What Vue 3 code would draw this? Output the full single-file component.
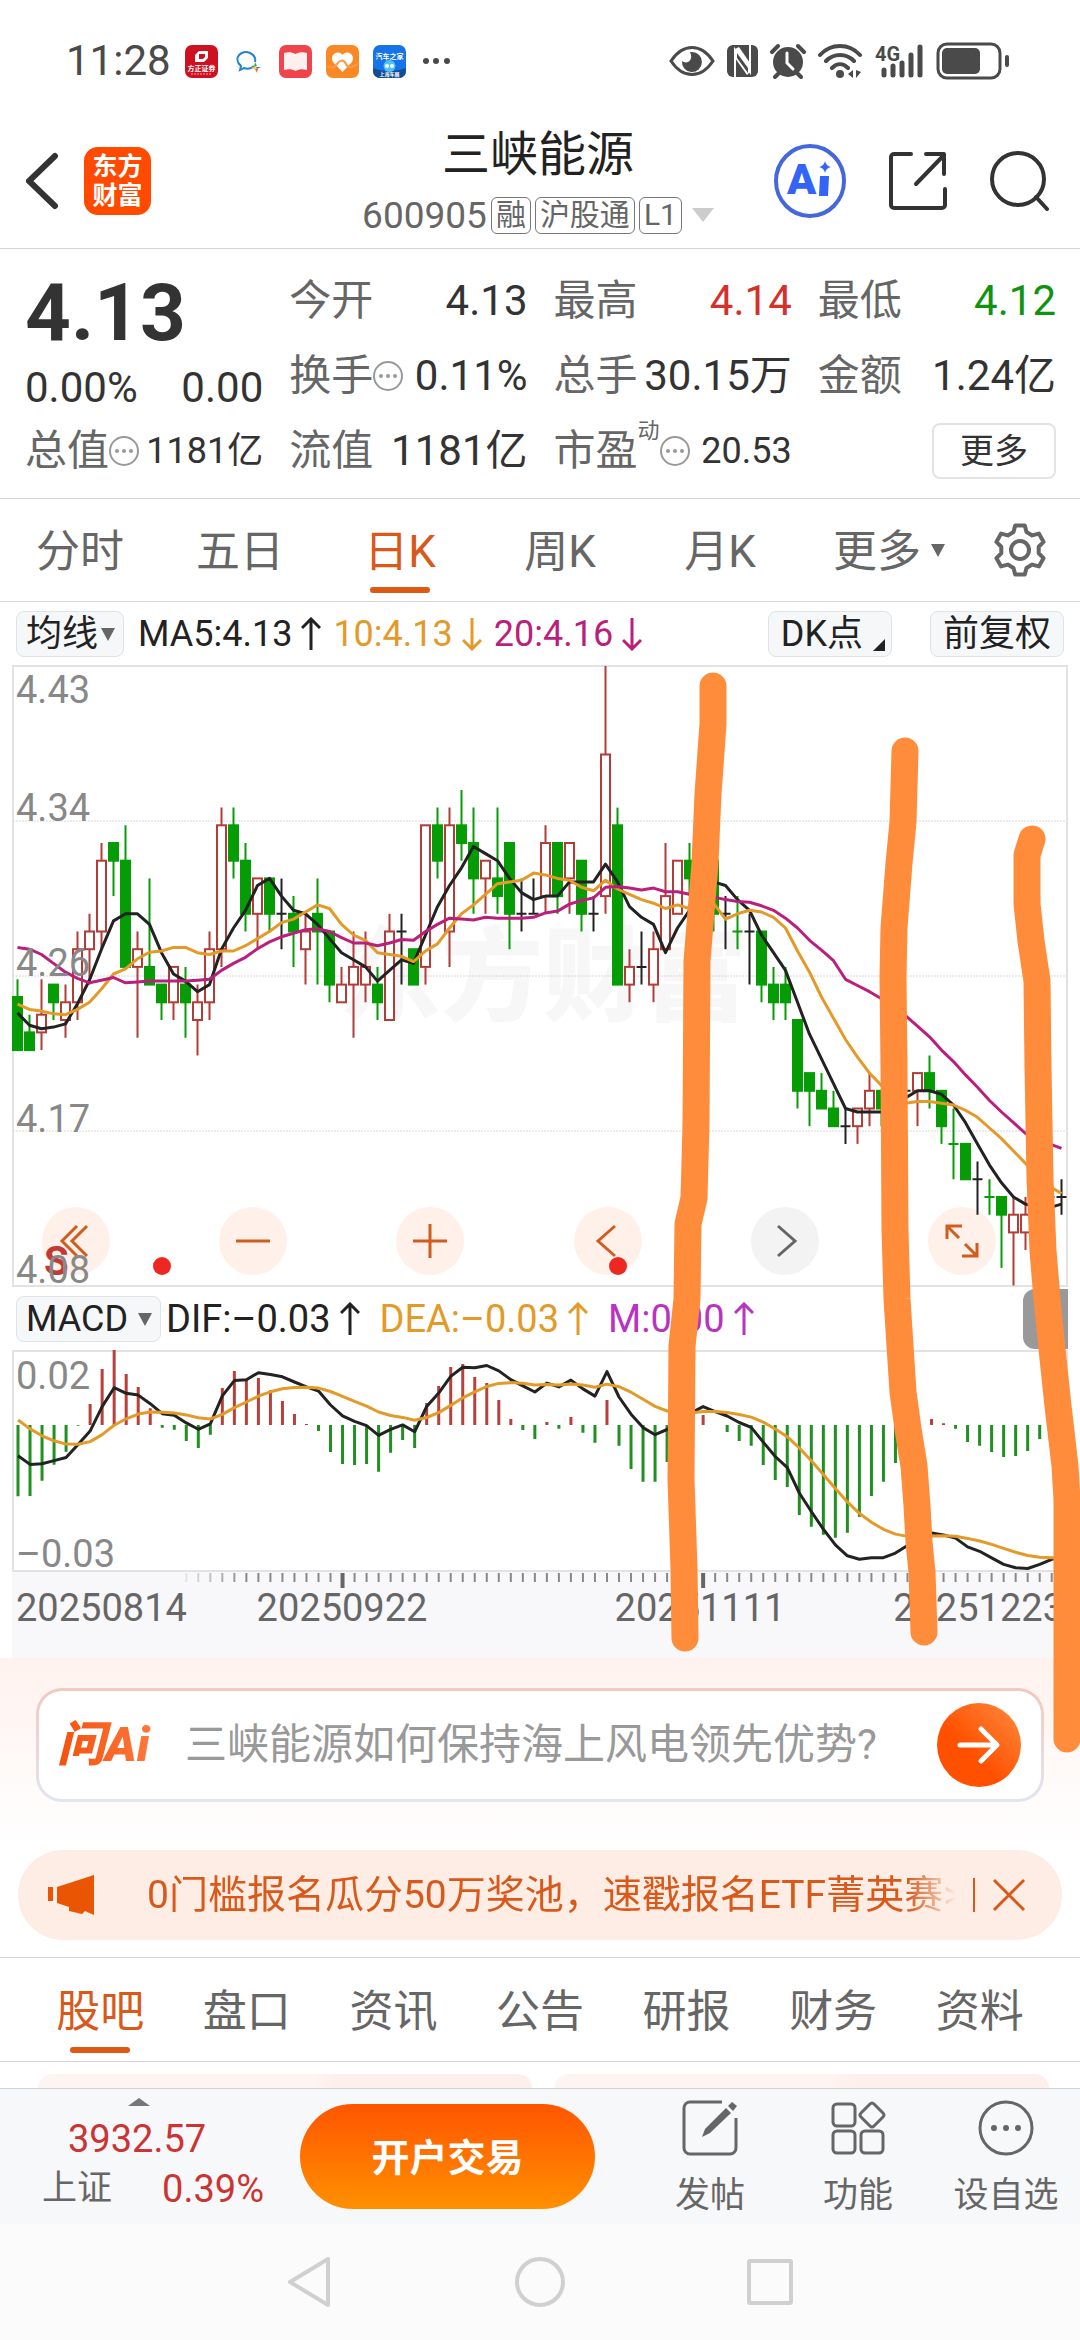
<template>
    <div class="page">
        <div class="status">
            <div class="status_left">
                <span class="time">11:28</span>
                <svg class="app" viewBox="0 0 33 33">
                    <rect width="33" height="33" rx="7" fill="#cf1020" />
                    <path d="M14 6h9v7l-4 4h-9v-7z M14 9v5h4l2-2V9z" fill="#fff" fill-rule="evenodd" />
                    <text x="16.5" y="26" font-size="7" font-weight="700" fill="#fff" text-anchor="middle">方正证券</text>
                    <path d="M6 29h21" stroke="#f3a0a5" stroke-width="1" stroke-dasharray="2 1" />
                </svg>
                <svg class="app" viewBox="0 0 33 33" fill="none">
                    <path d="M22 21c-3 3-7 3-10 2l-4 2 1-4c-9-8 1-17 9-13 4 2 6 5 5 9" stroke="#2584cc" stroke-width="2" />
                    <path d="M23 17l2 4-3 1z" fill="#3fa345" />
                    <path d="M29 22l-4 2-1-2z" fill="#2a7fd0" />
                    <path d="M25 28l-2-4 3-1z" fill="#e8662d" />
                    <path d="M19 23l4-2 1 3z" fill="#f3bb22" />
                </svg>
                <svg class="app" viewBox="0 0 33 33">
                    <rect width="33" height="33" rx="7" fill="#f0444c" />
                    <path d="M5 8c4-1 8-1 11.500 1C20 7 24 7 28 8v17c-4-1-8-1-11.500 1C13 24 9 24 5 25z" fill="#fff0ee" />
                </svg>
                <svg class="app" viewBox="0 0 33 33">
                    <rect width="33" height="33" rx="7" fill="#fa8824" />
                    <path d="M16.500 27L7 17C3 10 12 4 16.500 10 21 4 30 10 26 17z" fill="#fff" />
                    <path d="M1 21c5 3 8 1 10-2s6-6 9 0 7 2 12 0" fill="none" stroke="#fa9a48" stroke-width="2" />
                </svg>
                <svg class="app" viewBox="0 0 33 33">
                    <rect width="33" height="33" rx="7" fill="#1673ea" />
                    <path d="M0 23c10 4 23 4 33 0v3a7 7 0 0 1-7 7H7a7 7 0 0 1-7-7z" fill="#164c94" />
                    <circle cx="16.500" cy="21" r="6" fill="#4cc4f4" />
                    <circle cx="14" cy="21" r="2" fill="#fff" />
                    <circle cx="19" cy="21" r="2" fill="#fff" />
                    <text x="16.5" y="14" font-size="7" font-weight="700" fill="#fff" text-anchor="middle">汽车之家</text>
                    <text x="16.5" y="31" font-size="5" font-weight="700" fill="#fff" text-anchor="middle">上海车展</text>
                </svg>
                <svg class="app" viewBox="0 0 33 33" fill="#4a4a4a">
                    <circle cx="6" cy="16" r="3" />
                    <circle cx="16" cy="16" r="3" />
                    <circle cx="27" cy="16" r="3" />
                </svg>
            </div>
            <div class="status_right">
                <svg width="46" height="34" viewBox="0 0 46 34">
                    <path d="M2 17C14-1 32-1 44 17 32 35 14 35 2 17z" fill="none" stroke="#4a4a4a" stroke-width="3" />
                    <path d="M23 8a10 10 0 1 1-10 9c5 4 12-1 8-9z" fill="#4a4a4a" />
                </svg>
                <svg width="31" height="34" viewBox="0 0 31 34">
                    <rect y="1" width="31" height="32" rx="6" fill="#4a4a4a" />
                    <path d="M8 33V6l15 22V1" fill="none" stroke="#fff" stroke-width="2" />
                    <path d="M8 5l4-2 11 16v9l-3 3L8 14z" fill="#fff" />
                    <path d="M10 9l11 15v5L10 14z" fill="#4a4a4a" />
                </svg>
                <svg width="36" height="36" viewBox="0 0 36 36">
                    <circle cx="18" cy="19" r="15" fill="#4a4a4a" />
                    <path d="M2 9l6-6M34 9l-6-6M5 34l4-4M31 34l-4-4" stroke="#4a4a4a" stroke-width="4" stroke-linecap="round" />
                    <path d="M17 10v10l6 6" fill="none" stroke="#fff" stroke-width="3" stroke-linecap="round" />
                </svg>
                <svg width="44" height="36" viewBox="0 0 44 36" fill="none" stroke="#4a4a4a" stroke-width="4" stroke-linecap="round">
                    <path d="M2 12C13 0 31 0 42 12M8 18c8-8 20-8 28 0M14 25c5-5 11-5 16 0" />
                    <circle cx="22" cy="31" r="4" fill="#4a4a4a" stroke="none" />
                    <path d="M35 27v8l-5-4zM38 27v8l5-6z" fill="#4a4a4a" stroke="none" />
                </svg>
                <svg class="signal" width="50" height="36" viewBox="0 0 50 36">
                    <text x="1" y="18" font-size="20" font-weight="700" fill="#4a4a4a">4G</text>
                    <path d="M10 27v5M19 23v9M28 20v12M37 12v20M46 4v28" stroke="#4a4a4a" stroke-width="5" stroke-linecap="round" />
                </svg>
                <svg width="74" height="38" viewBox="0 0 74 38">
                    <rect x="2" y="2" width="62" height="34" rx="9" fill="none" stroke="#4a4a4a" stroke-width="3" />
                    <rect x="6" y="6" width="38" height="26" rx="5" fill="#4a4a4a" />
                    <rect x="69" y="13" width="4" height="12" rx="2" fill="#4a4a4a" />
                </svg>
            </div>
        </div>

        <header class="header">
            <div class="header_left">
                <button class="icon_btn" aria-label="返回">
                    <svg width="34" height="58" viewBox="0 0 34 58" fill="none" stroke="#333" stroke-width="6" stroke-linecap="round">
                        <path d="M29 4L3 29l26 25" />
                    </svg>
                </button>
                <div class="logo"><span>东方</span><span>财富</span></div>
            </div>
            <div class="title">
                <h1>三峡能源</h1>
                <div class="sub">
                    <span class="code">600905</span>
                    <span class="tag">融</span>
                    <span class="tag">沪股通</span>
                    <span class="tag">L1</span>
                    <svg class="sub_arrow" width="22" height="14" viewBox="0 0 22 14"><path d="M0 0h22L11 14z" fill="#ccc" /></svg>
                </div>
            </div>
            <div class="header_right">
                <button class="icon_btn" aria-label="智能助手">
                    <svg width="72" height="74" viewBox="0 0 72 74">
                        <ellipse cx="36" cy="37" rx="34" ry="35" fill="#fff" stroke="#4468dc" stroke-width="4" />
                        <text x="13" y="50" font-size="43" font-weight="900" fill="#3464f6">A</text>
                        <path d="M46 32h9l-1 20h-9z" fill="#3464f6" />
                        <path d="M51 17q1 5 6 6-5 1-6 6-1-5-6-6 5-1 6-6z" fill="#3464f6" />
                    </svg>
                </button>
                <button class="icon_btn" aria-label="分享">
                    <svg width="58" height="60" viewBox="0 0 58 60" fill="none" stroke="#333" stroke-width="4" stroke-linecap="round" stroke-linejoin="round">
                        <path d="M22 3H5a3 3 0 0 0-3 3v48a3 3 0 0 0 3 3h48a3 3 0 0 0 3-3V38" />
                        <path d="M37 3h18v20M55 4L27 33" />
                    </svg>
                </button>
                <button class="icon_btn" aria-label="搜索">
                    <svg width="60" height="60" viewBox="0 0 60 60" fill="none" stroke="#333" stroke-width="4" stroke-linecap="round">
                        <circle cx="28" cy="28" r="26" />
                        <path d="M46 46l11 12" />
                    </svg>
                </button>
            </div>
        </header>

        <section class="quote">
            <div class="price_box">
                <div class="price">4.13</div>
                <div class="cell half"><span class="val">0.00%</span><span class="val">0.00</span></div>
            </div>
            <div v-for="item in quotes" :key="item.label" class="cell">
                <span class="lab">{{ item.label }}</span>
                <span v-if="item.sup" class="sup">{{ item.sup }}</span>
                <svg v-if="item.info" class="info" width="30" height="30" viewBox="0 0 30 30">
                    <circle cx="15" cy="15" r="14" fill="none" stroke="#999" stroke-width="2" />
                    <circle cx="8" cy="15" r="2" fill="#999" />
                    <circle cx="15" cy="15" r="2" fill="#999" />
                    <circle cx="22" cy="15" r="2" fill="#999" />
                </svg>
                <span class="val" :class="item.cls">{{ item.value }}</span>
            </div>
            <div class="cell more_cell"><button class="more">更多</button></div>
        </section>

        <nav class="periods">
            <button v-for="p in periods" :key="p" class="tab" :class="{ active: p === period, menu: p === '更多' }" @click="period = p">
                {{ p }}<svg v-if="p === '更多'" class="tri" width="14" height="13" viewBox="0 0 14 13"><path d="M0 0h14L7 13z" fill="#666" /></svg>
            </button>
            <button class="icon_btn gear" aria-label="设置">
                <svg width="56" height="56" viewBox="-28 -28 56 56" fill="none" stroke="#666" stroke-width="4" stroke-linejoin="round">
                    <path :d="gearPath" />
                    <circle r="9" />
                </svg>
            </button>
        </nav>

        <div class="ma_bar">
            <label class="pick">
                <select v-model="mainType" aria-label="主图指标"><option>均线</option></select>
                <svg width="14" height="13" viewBox="0 0 14 13"><path d="M0 0h14L7 13z" fill="#666" /></svg>
            </label>
            <span class="ma black">MA5:4.13<svg class="arrow" viewBox="0 0 20 34"><path d="M10 33V2M1 11l9-9 9 9" /></svg></span>
            <span class="ma yellow">10:4.13<svg class="arrow" viewBox="0 0 20 34"><path d="M10 1v31M1 23l9 9 9-9" /></svg></span>
            <span class="ma pink">20:4.16<svg class="arrow" viewBox="0 0 20 34"><path d="M10 1v31M1 23l9 9 9-9" /></svg></span>
            <button class="chip dk">DK点<svg width="12" height="12" viewBox="0 0 12 12"><path d="M12 0v12H0z" fill="#222" /></svg></button>
            <button class="chip">前复权</button>
        </div>

        <div class="charts">
            <div class="kline">
                <div class="tools">
                    <button v-for="t in tools" :key="t.name" class="tool" :class="{ off: t.off }" :aria-label="t.name">
                        <svg width="44" height="44" viewBox="-22 -22 44 44" fill="none" stroke="currentColor" stroke-width="3"><path :d="t.d" /></svg>
                    </button>
                </div>
                <svg class="plot" viewBox="0 0 1056 622">
                    <text class="mark" x="327" y="348">东方财富</text>
                    <path class="grid" d="M1 156h1054M1 311h1054M1 466h1054" />
                    <rect class="frame" x="1" y="1" width="1054" height="620" />
                    <g v-for="(c, i) in bars" :key="i" :class="c.kind">
                        <path :d="c.wick" />
                        <rect v-if="c.h > 0" :x="c.x" :y="c.y" width="9" :height="c.h" />
                    </g>
                    <polyline class="line l5" :points="maLine(5, head5)" />
                    <polyline class="line l10" :points="maLine(10, head10)" />
                    <polyline class="line l20" :points="maLine(20, head20)" />
                    <text class="sell" x="32" y="610">S</text>
                    <text class="axis" x="4" y="38">4.43</text>
                    <text class="axis" x="4" y="156">4.34</text>
                    <text class="axis" x="4" y="311">4.26</text>
                    <text class="axis" x="4" y="467">4.17</text>
                    <text class="axis" x="4" y="618">4.08</text>
                    <circle cx="150" cy="601" r="9" fill="#ee2722" />
                    <circle cx="606" cy="601" r="9" fill="#ee2722" />
                </svg>
            </div>

            <div class="macd_bar">
                <label class="pick wide">
                    <select v-model="subType" aria-label="副图指标"><option>MACD</option></select>
                    <svg width="14" height="13" viewBox="0 0 14 13"><path d="M0 0h14L7 13z" fill="#666" /></svg>
                </label>
                <span class="ma black">DIF:–0.03<svg class="arrow" viewBox="0 0 20 34"><path d="M10 33V2M1 11l9-9 9 9" /></svg></span>
                <span class="ma yellow">DEA:–0.03<svg class="arrow" viewBox="0 0 20 34"><path d="M10 33V2M1 11l9-9 9 9" /></svg></span>
                <span class="ma violet">M:0.00<svg class="arrow" viewBox="0 0 20 34"><path d="M10 33V2M1 11l9-9 9 9" /></svg></span>
                <span class="handle"></span>
            </div>

            <svg class="plot" viewBox="0 0 1056 308">
                <rect y="222" width="1056" height="86" fill="#f8f8fb" />
                <rect class="frame" x="1" y="1" width="1054" height="220" />
                <path class="stick up" :d="stickPath(true)" />
                <path class="stick down" :d="stickPath(false)" />
                <polyline class="line l5" :points="difLine" />
                <polyline class="line l10" :points="deaLine" />
                <text class="axis" x="4" y="39">0.02</text>
                <text class="axis" x="4" y="217">–0.03</text>
                <path v-for="t in ticks" :key="t.x" class="tick" :class="{ big: t.big }" :d="`M${t.x} 223v${t.big ? 15 : 9}`" :opacity="t.opacity" />
                <text class="date" x="4" y="271">20250814</text>
                <text class="date" x="330" y="271" text-anchor="middle">20250922</text>
                <text class="date" x="688" y="271" text-anchor="middle">20251111</text>
                <text class="date" x="1052" y="271" text-anchor="end">20251223</text>
            </svg>

            <!-- 手绘标记 -->
            <svg class="marker" viewBox="0 666 1080 1088">
                <path d="M713 687V725L708 795 705 864 697 962 696 1125 694 1199 688 1225 687 1300 682 1347 681 1480 684 1570 685 1639" />
                <path d="M905 752L903 823 899 864 894 929 893 978 894 1068 895 1231 897 1300 900 1347 903 1393 908 1430 914 1467 917 1507 919 1543 922 1573 924 1633" />
                <path d="M1032 840L1027 856V905L1031 942 1037 982 1038 1068 1040 1180 1043 1252 1047 1300 1052 1350 1058 1407 1065 1467 1067 1500V1740" />
            </svg>
        </div>

        <section class="ask">
            <div class="ask_box">
                <span class="ask_logo">问Ai</span>
                <input v-model="question" type="text" aria-label="问Ai" placeholder="三峡能源如何保持海上风电领先优势?" />
                <button class="go" aria-label="提问">
                    <svg width="44" height="40" viewBox="0 0 44 40" fill="none" stroke="#fff" stroke-width="5" stroke-linecap="round" stroke-linejoin="round">
                        <path d="M3 20h36M24 4l16 16-16 16" />
                    </svg>
                </button>
            </div>
        </section>

        <div class="banner">
            <svg class="horn" width="46" height="40" viewBox="0 0 46 40" fill="#ea5504"><path d="M0 12h5v14H0zM9 12L46 0v40l-9-4-3 3-13-3v-4L9 28z" /></svg>
            <a class="banner_text" href="#">0门槛报名瓜分50万奖池，速戳报名ETF菁英赛&gt;&gt;</a>
            <button class="icon_btn close" aria-label="关闭">
                <svg width="34" height="34" viewBox="0 0 34 34" stroke="#d8591a" stroke-width="3"><path d="M2 2l30 30M32 2L2 32" /></svg>
            </button>
        </div>

        <nav class="sections">
            <button v-for="s in sections" :key="s" class="tab" :class="{ active: s === section }" @click="section = s">{{ s }}</button>
        </nav>
        <div class="peek"><i></i><i></i></div>

        <footer class="footer">
            <div class="index">
                <svg width="22" height="8" viewBox="0 0 22 8"><path d="M11 0l11 8H0z" fill="#777" /></svg>
                <span class="point">3932.57</span>
                <div class="index_row"><span>上证</span><span class="rate">0.39%</span></div>
            </div>
            <button class="trade">开户交易</button>
            <div class="actions">
                <button class="action">
                    <svg width="56" height="56" viewBox="0 0 56 56" fill="none" stroke="#666" stroke-width="3">
                        <path d="M40 2H8a6 6 0 0 0-6 6v40a6 6 0 0 0 6 6h40a6 6 0 0 0 6-6V18" />
                        <path d="M20 37l3-8L44 8l5 5-21 20z" fill="#666" stroke="none" />
                        <path d="M46 6l4-4 5 4-4 5z" fill="#666" stroke="none" />
                    </svg>
                    发帖
                </button>
                <button class="action">
                    <svg width="56" height="56" viewBox="0 0 56 56" fill="none" stroke="#666" stroke-width="3">
                        <rect x="3" y="4" width="22" height="22" rx="4" />
                        <rect x="3" y="31" width="22" height="22" rx="4" />
                        <rect x="31" y="31" width="22" height="22" rx="4" />
                        <path d="M40 4q2-2 4 0l9 9q2 2 0 4l-9 9q-2 2-4 0l-9-9q-2-2 0-4z" />
                    </svg>
                    功能
                </button>
                <button class="action">
                    <svg width="56" height="56" viewBox="0 0 56 56">
                        <circle cx="28" cy="28" r="26" fill="none" stroke="#666" stroke-width="3" />
                        <circle cx="16" cy="28" r="3" fill="#666" />
                        <circle cx="28" cy="28" r="3" fill="#666" />
                        <circle cx="40" cy="28" r="3" fill="#666" />
                    </svg>
                    设自选
                </button>
            </div>
        </footer>

        <div class="sysnav">
            <svg viewBox="0 0 52 52"><path d="M6 26L44 3v46z" /></svg>
            <svg viewBox="0 0 52 52"><circle cx="26" cy="26" r="23" /></svg>
            <svg viewBox="0 0 52 52"><rect x="5" y="5" width="42" height="42" rx="1" /></svg>
        </div>
    </div>
</template>
<script setup>
import { ref, computed } from 'vue'

const quotes = [
    { label: '今开', value: '4.13' },
    { label: '最高', value: '4.14', cls: 'red' },
    { label: '最低', value: '4.12', cls: 'green' },
    { label: '换手', value: '0.11%', info: true },
    { label: '总手', value: '30.15万' },
    { label: '金额', value: '1.24亿' },
    { label: '总值', value: '1181亿', info: true, cls: 'small' },
    { label: '流值', value: '1181亿' },
    { label: '市盈', value: '20.53', sup: '动', info: true, cls: 'small' },
]
const periods = ['分时', '五日', '日K', '周K', '月K', '更多']
const period = ref('日K')
const sections = ['股吧', '盘口', '资讯', '公告', '研报', '财务', '资料']
const section = ref('股吧')
const mainType = ref('均线')
const subType = ref('MACD')
const question = ref('')

const tools = [
    { name: '最早', d: 'M1-15L-14 0 1 15M11-15L-4 0 11 15' },
    { name: '缩小', d: 'M-17 0h34' },
    { name: '放大', d: 'M-17 0h34M0-17v34' },
    { name: '向左', d: 'M7-15L-10 0 7 15' },
    { name: '向右', d: 'M-7-15L10 0-7 15', off: true },
    { name: '全屏', d: 'M-15-2V-15H0M-15-15L-3-3M15 2v13H0M15 15L3 3' },
]

// 齿轮：六个齿
const gearPath = computed(() => {
    const pts = []
    for (let k = 0; k < 6; k++) {
        const mid = -90 + 60 * k
        for (const [da, r] of [[-20, 19], [-11, 25], [11, 25], [20, 19]]) {
            const a = ((mid + da) * Math.PI) / 180
            pts.push(`${(r * Math.cos(a)).toFixed(1)} ${(r * Math.sin(a)).toFixed(1)}`)
        }
    }
    return `M${pts.join('L')}Z`
})

// K线：[涨跌, 实体上沿, 实体下沿, 最高, 最低]，单位为分，省略 4 元
const candles = [
    ['g', 24.3, 21.3, 25.3, 21.3], ['g', 22.3, 21.3, 23.3, 21.3], ['r', 23.3, 22.3, 25.3, 21.3], ['g', 25, 24, 25, 23],
    ['r', 24, 23, 25, 22], ['r', 27, 24, 28, 23], ['r', 28, 27, 29, 25], ['r', 32, 28, 33, 27],
    ['g', 33, 32, 33, 30], ['g', 32, 26, 34, 26], ['r', 27, 26, 28, 22], ['g', 26, 25, 31, 25],
    ['g', 25, 24, 25, 23], ['r', 26, 24, 26, 23], ['g', 25, 24, 26, 22], ['r', 24, 23, 25, 21],
    ['r', 27, 24, 28, 23], ['r', 34, 27, 35, 26], ['g', 34, 32, 35, 31], ['g', 32, 29, 33, 28],
    ['r', 31, 29, 31, 27], ['g', 31, 29, 31, 28], ['k', 29, 29, 31, 27], ['g', 29, 28, 30, 26],
    ['r', 28, 27, 29, 25], ['g', 29, 28, 31, 25], ['g', 28, 25, 28, 24], ['r', 25, 24, 26, 24],
    ['r', 26, 25, 28, 22], ['r', 26, 25, 28, 24], ['g', 25, 24, 26, 23], ['r', 28, 23, 29, 23],
    ['k', 28, 28, 29, 25], ['g', 27, 25, 27, 25], ['r', 34, 26, 34, 25], ['g', 34, 32, 35, 31],
    ['r', 34, 28, 35, 26], ['g', 34, 33, 36, 32], ['g', 33, 31, 35, 29], ['r', 32, 31, 32, 29],
    ['g', 31, 30, 35, 29], ['g', 33, 29, 33, 27], ['k', 29, 29, 31, 28], ['k', 29, 29, 31, 29],
    ['r', 33, 30, 34, 29], ['g', 33, 30, 33, 29], ['r', 33, 31, 33, 29], ['g', 32, 29, 32, 28],
    ['k', 29, 29, 30, 28], ['r', 38, 30, 43, 29], ['g', 34, 25, 35, 25], ['r', 26, 25, 27, 24],
    ['k', 26, 26, 28, 25], ['r', 27, 25, 28, 24], ['r', 30, 27, 33, 27], ['r', 32, 29, 32, 29],
    ['g', 32, 31, 33, 30], ['r', 32, 31, 32, 30], ['g', 32, 29, 32, 28], ['k', 29, 29, 30, 27],
    ['g', 28, 28, 30, 27], ['k', 28, 28, 29, 25], ['g', 28, 25, 28, 24], ['g', 25, 24, 26, 23],
    ['g', 25, 24, 26, 23], ['g', 23, 19, 23, 18], ['g', 20, 19, 20, 17], ['g', 19, 18, 20, 18],
    ['g', 18, 17, 19, 17], ['k', 17, 17, 18, 16], ['r', 18, 17, 18, 16], ['r', 19, 18, 20, 17],
    ['g', 19, 18, 19, 17], ['r', 19, 18, 19, 18], ['k', 19, 19, 20, 18], ['r', 20, 19, 20, 17],
    ['g', 20, 19, 21, 18], ['g', 19, 17, 19, 16], ['g', 16, 16, 18, 14], ['g', 16, 14, 16, 14],
    ['k', 14, 14, 15, 12], ['g', 13, 13, 14, 12], ['g', 13, 12, 13, 9], ['r', 12, 11, 13, 8],
    ['r', 12, 11, 13, 10], ['r', 13, 12, 13, 12], ['k', 13, 13, 13, 12], ['k', 13, 13, 14, 12],
]
// 均线起始段，之后由收盘价算出
const head5 = [23.4, 22.7, 22.5, 22.6]
const head10 = [23.9, 23.6, 23.5, 23.35, 23.3, 23.6, 24, 24.75, 25.6]
const head20 = [27.1, 27, 26.7, 26.2, 25.7, 25.35, 25.1, 25.25, 25.4, 25.1, 25.15, 25.2, 25.2, 25.2, 25.2, 25.25, 25.3, 25.8, 26.2]

const px = (i) => 5.5 + i * 12
const py = (v) => 1 + (43 - v) * 17.7

const bars = candles.map(([color, top, bottom, high, low], i) => {
    const x = px(i)
    const flat = top === bottom
    let wick = `M${x} ${py(high)}V${py(top)}M${x} ${py(bottom)}V${py(low)}`
    if (flat) wick = `M${x} ${py(high)}V${py(low)}M${x - 5} ${py(top)}h10`
    return { kind: color, wick, x: x - 4.5, y: py(top), h: flat ? 0 : py(bottom) - py(top) }
})

const maLine = (n, head) => {
    const closes = candles.map((c) => (c[0] === 'g' ? c[2] : c[1]))
    return closes
        .map((_, i) => {
            let v = head[i]
            if (i >= n - 1) {
                v = closes.slice(i - n + 1, i + 1).reduce((a, b) => a + b, 0) / n
            }
            return `${px(i)},${py(v).toFixed(1)}`
        })
        .join(' ')
}

// MACD 柱
const macd = [
    -214, -213, -167, -119, -80, -2, 63, 168, 225, 153, 114, 50, -8, -14, -48, -69, -29, 111, 162, 134, 141, 104,
    72, 33, 3, -18, -81, -117, -120, -117, -140, -83, -45, -69, 66, 117, 174, 183, 144, 126, 75, 18, -15, -42,
    9, -11, 24, -23, -53, 75, -62, -132, -170, -170, -111, -45, 0, 30, 0, -21, -48, -62, -120, -165, -186, -270,
    -305, -329, -338, -323, -275, -213, -170, -114, -55, -10, 18, 5, -11, -51, -62, -81, -96, -93, -78, -42, -10, 5,
]
const zero = 75
const mx = (i) => 6 + i * 12.02
const my = (v) => (zero - v / 3).toFixed(1)
const dea = []
macd.forEach((m, i) => dea.push(i === 0 ? 15 : dea[i - 1] + m / 8))
const deaLine = dea.map((v, i) => `${mx(i)},${my(v)}`).join(' ')
const difLine = dea.map((v, i) => `${mx(i)},${my(v + macd[i] / 2)}`).join(' ')
const stickPath = (up) =>
    macd
        .map((m, i) => (m !== 0 && m > 0 === up ? `M${mx(i)} ${zero}V${my(m)}` : ''))
        .join('')

const ticks = []
for (let i = 14; i < 88; i++) {
    ticks.push({ x: mx(i), big: i === 27 || i === 57, opacity: Math.min(1, (i - 13) / 6) })
}
</script>
<style>
body {
    margin: 0;
    background: #fff;
}
</style>
<style scoped>
* {
    box-sizing: border-box;
}
.page {
    font-family: Roboto, 'Noto Sans CJK SC', sans-serif;
    color: #333;
    background: #fff;
    overflow: hidden;
}
svg {
    flex: none;
}
button {
    font-family: inherit;
    color: inherit;
    background: none;
    border: 0;
    padding: 0;
}
.icon_btn {
    display: flex;
    align-items: center;
    justify-content: center;
}
.status {
    height: 118px;
    padding: 4px 70px 0 66px;
    display: flex;
    align-items: center;
    justify-content: space-between;
}
.status_left {
    display: flex;
    align-items: center;
    gap: 14px;
}
.status_right {
    display: flex;
    align-items: center;
    gap: 12px;
}
.signal {
    overflow: visible;
}
.time {
    font-size: 42px;
    color: #4a4a4a;
    line-height: 50px;
}
.app {
    width: 33px;
    height: 33px;
}
.header {
    height: 131px;
    padding: 0 30px 4px 26px;
    border-bottom: 1px solid #d5d5d5;
    display: grid;
    grid-template-columns: 1fr auto 1fr;
    align-items: center;
}
.header_left {
    display: flex;
    align-items: center;
    gap: 24px;
}
.logo {
    width: 67px;
    height: 68px;
    border-radius: 14px;
    background: #ff4a00;
    color: #fff;
    font-size: 25px;
    font-weight: 700;
    line-height: 29px;
    display: flex;
    flex-direction: column;
    align-items: center;
    justify-content: center;
}
.title {
    text-align: center;
}
h1 {
    margin: 0 0 12px;
    font-size: 48px;
    font-weight: 400;
    line-height: 56px;
    color: #222;
}
.sub {
    display: flex;
    align-items: center;
    gap: 4px;
    height: 40px;
    color: #666;
}
.code {
    font-size: 37px;
}
.tag {
    height: 37px;
    padding: 0 4px;
    border: 1px solid #777;
    border-radius: 6px;
    font-size: 30px;
    line-height: 34px;
}
.sub_arrow {
    margin-left: 6px;
}
.header_right {
    display: flex;
    align-items: center;
    justify-content: flex-end;
    gap: 43px;
}
.quote {
    padding: 14px 24px 10px 25px;
    border-bottom: 1px solid #d5d5d5;
    display: grid;
    grid-template-columns: repeat(4, 1fr);
    grid-auto-rows: 75px;
    column-gap: 26px;
}
.price_box {
    grid-row: span 2;
}
.price {
    font-size: 80px;
    font-weight: 700;
    line-height: 100px;
}
.cell {
    display: flex;
    align-items: center;
    white-space: nowrap;
}
.half {
    height: 50px;
    justify-content: space-between;
}
.lab {
    font-size: 42px;
    line-height: 60px;
    color: #666;
}
.val {
    margin-left: auto;
    font-size: 42px;
    line-height: 60px;
}
.half .val {
    margin-left: 0;
}
.small {
    font-size: 36px;
}
.red {
    color: #d5302c;
}
.green {
    color: #109410;
}
.sup {
    align-self: flex-start;
    font-size: 22px;
    line-height: 36px;
    color: #666;
}
.more_cell {
    justify-content: flex-end;
}
.more {
    width: 124px;
    height: 56px;
    border: 2px solid #e3e3e3;
    border-radius: 8px;
    font-size: 34px;
    line-height: 50px;
}
.periods {
    height: 103px;
    border-bottom: 1px solid #d5d5d5;
    display: grid;
    grid-template-columns: repeat(6, 4fr) 3fr;
}
.tab {
    position: relative;
    padding-bottom: 4px;
    font-size: 44px;
    color: #666;
    white-space: nowrap;
}
.tab.menu {
    padding-left: 18px;
}
.tab.active {
    color: #d8591a;
}
.tab.active::after {
    content: '';
    position: absolute;
    left: calc(50% - 30px);
    bottom: 8px;
    width: 60px;
    height: 6px;
    border-radius: 3px;
    background: #dc5a14;
}
.tri {
    margin: 0 0 10px 10px;
}
.ma_bar,
.macd_bar {
    position: relative;
    display: flex;
    align-items: center;
    height: 63px;
}
.ma_bar {
    padding: 0 16px;
}
.pick {
    position: relative;
    width: 108px;
    margin-right: 14px;
}
.pick.wide {
    width: 145px;
    margin-right: 5px;
}
.pick select {
    display: block;
    width: 100%;
    height: 46px;
    padding: 0 0 0 9px;
    appearance: none;
    border: 1px solid #dfe2e6;
    border-radius: 8px;
    background: #f6f7f9;
    font: 36px/44px Roboto, 'Noto Sans CJK SC', sans-serif;
    color: #222;
}
.pick svg {
    position: absolute;
    right: 9px;
    top: 17px;
    pointer-events: none;
}
.ma {
    display: flex;
    align-items: center;
    font-size: 36px;
    white-space: nowrap;
    margin-right: 12px;
}
.macd_bar .ma {
    font-size: 38px;
    margin-right: 20px;
}
.arrow {
    width: 20px;
    height: 34px;
    margin-left: 9px;
    fill: none;
    stroke: currentColor;
    stroke-width: 3;
}
.black {
    color: #222;
}
.yellow {
    color: #e39a28;
}
.pink {
    color: #bb1f7c;
}
.violet {
    color: #b833c0;
}
.chip {
    position: relative;
    height: 46px;
    padding: 0 12px;
    border: 1px solid #dfe2e6;
    border-radius: 8px;
    background: #f6f7f9;
    font-size: 36px;
    line-height: 42px;
    color: #222;
}
.chip.dk {
    margin-left: auto;
    margin-right: 38px;
    padding-right: 28px;
}
.chip svg {
    position: absolute;
    right: 6px;
    bottom: 5px;
}
.charts {
    position: relative;
    padding: 0 12px;
}
.kline {
    position: relative;
}
.plot {
    position: relative;
    display: block;
    width: 100%;
    height: auto;
    pointer-events: none;
}
.frame {
    fill: none;
    stroke: #e2e2e2;
    stroke-width: 2;
}
.grid {
    stroke: #d8d8d8;
    stroke-width: 1;
    stroke-dasharray: 2 1;
}
.mark {
    font-size: 102px;
    font-weight: 900;
    fill: #f7f7f7;
}
.axis {
    font-size: 38px;
    fill: #888;
}
.sell {
    font-size: 40px;
    font-weight: 700;
    fill: #c23a34;
}
.date {
    font-size: 38px;
    fill: #666;
}
.g {
    fill: #069c06;
    stroke: #069c06;
}
.r {
    fill: #fff;
    stroke: #b23c38;
}
.k {
    fill: #222;
    stroke: #222;
}
.g,
.r,
.k {
    stroke-width: 2;
}
.line {
    fill: none;
    stroke-width: 3;
    stroke-linejoin: round;
}
.l5 {
    stroke: #222;
}
.l10 {
    stroke: #e39a28;
}
.l20 {
    stroke: #bb1f7c;
}
.stick {
    stroke-width: 3;
}
.stick.up {
    stroke: #b8403c;
}
.stick.down {
    stroke: #209020;
}
.tick {
    stroke: #888;
    stroke-width: 2;
}
.tick.big {
    stroke: #666;
    stroke-width: 4;
}
.tools {
    position: absolute;
    left: 30px;
    right: 72px;
    bottom: 12px;
    display: flex;
    justify-content: space-between;
}
.tool {
    width: 68px;
    height: 68px;
    border-radius: 50%;
    background: #fff1ea;
    color: #cf5e1e;
    display: flex;
    align-items: center;
    justify-content: center;
}
.tool.off {
    background: #f3f3f3;
    color: #666;
}
.macd_bar {
    padding-left: 4px;
}
.handle {
    position: absolute;
    right: 0;
    top: 2px;
    width: 45px;
    height: 60px;
    border-radius: 12px 0 0 12px;
    background: #999;
}
.marker {
    position: absolute;
    left: 0;
    top: 0;
    width: 100%;
    overflow: visible;
    z-index: 2;
    pointer-events: none;
    fill: none;
    stroke: #ff8c3a;
    stroke-width: 27;
    stroke-linecap: round;
    stroke-linejoin: round;
}
.ask {
    padding: 30px 36px 48px;
    background: linear-gradient(#fff2ee, #fff);
}
.ask_box {
    height: 114px;
    padding: 0 20px 0 18px;
    border: 3px solid transparent;
    border-radius: 26px;
    background: linear-gradient(#fff, #fff) padding-box, linear-gradient(#f2c8c0, #e0e6ef) border-box;
    display: flex;
    align-items: center;
}
.ask_logo {
    width: 104px;
    margin-right: 24px;
    font-size: 48px;
    font-weight: 900;
    font-style: italic;
    line-height: 60px;
    white-space: nowrap;
    background: linear-gradient(90deg, #f4500c, #ff7c40);
    background-clip: text;
    color: transparent;
}
.ask input {
    flex: 1;
    min-width: 0;
    padding: 0;
    border: 0;
    outline: 0;
    background: none;
    font: 42px/60px Roboto, 'Noto Sans CJK SC', sans-serif;
}
.ask input::placeholder {
    color: #999;
    opacity: 1;
}
.go {
    width: 84px;
    height: 84px;
    border-radius: 50%;
    background: linear-gradient(45deg, #ff5000 40%, #ff8c40);
    display: flex;
    align-items: center;
    justify-content: center;
}
.banner {
    height: 90px;
    margin: 0 18px;
    padding: 0 36px 0 30px;
    border-radius: 45px;
    background: #fdede4;
    display: flex;
    align-items: center;
}
.banner_text {
    flex: 1;
    min-width: 0;
    margin-left: 53px;
    overflow: hidden;
    white-space: nowrap;
    font-size: 39px;
    line-height: 60px;
    color: #d8591a;
    text-decoration: none;
    mask-image: linear-gradient(90deg, #000 94%, transparent);
}
.close {
    margin-left: 17px;
    padding-left: 17px;
    border-left: 2px solid #d8591a;
}
.sections {
    height: 105px;
    margin-top: 17px;
    padding: 0 27px;
    border-top: 1px solid #d5d5d5;
    border-bottom: 1px solid #d5d5d5;
    display: grid;
    grid-template-columns: repeat(7, 1fr);
}
.peek {
    height: 26px;
    padding: 12px 31px 0 38px;
    display: flex;
    gap: 23px;
}
.peek i {
    flex: 1;
    border-radius: 20px 20px 0 0;
    background: linear-gradient(90deg, #fef5f2 55%, #fdefec 60%);
}
.footer {
    height: 136px;
    padding: 0 0 0 30px;
    border-top: 1px solid #d0d3d6;
    background: #f7f8fa;
    display: flex;
    align-items: center;
}
.index {
    width: 244px;
    height: 126px;
    padding-left: 12px;
    display: flex;
    flex-direction: column;
}
.index > svg {
    margin: 4px 0 6px 86px;
}
.point {
    padding-left: 26px;
    font-size: 38px;
    line-height: 54px;
    color: #cc3433;
}
.index_row {
    width: 222px;
    display: flex;
    justify-content: space-between;
    font-size: 35px;
    line-height: 46px;
    color: #666;
}
.rate {
    font-size: 38px;
    color: #cc3433;
}
.trade {
    flex: none;
    width: 295px;
    height: 105px;
    margin-left: 26px;
    padding-bottom: 4px;
    border-radius: 53px;
    background: linear-gradient(#ff5500, #ff9000);
    color: #fff;
    font-size: 38px;
    font-weight: 700;
}
.actions {
    flex: 1;
    padding: 6px 0 0 41px;
    display: grid;
    grid-template-columns: repeat(3, 1fr);
}
.action {
    display: flex;
    flex-direction: column;
    align-items: center;
    gap: 16px;
    font-size: 35px;
    line-height: 48px;
    color: #666;
}
.sysnav {
    height: 116px;
    background: #fbfbfb;
    display: flex;
    align-items: center;
    justify-content: center;
    gap: 178px;
}
.sysnav svg {
    width: 52px;
    height: 52px;
    fill: none;
    stroke: #d0d0d0;
    stroke-width: 4;
    stroke-linejoin: round;
}
</style>
